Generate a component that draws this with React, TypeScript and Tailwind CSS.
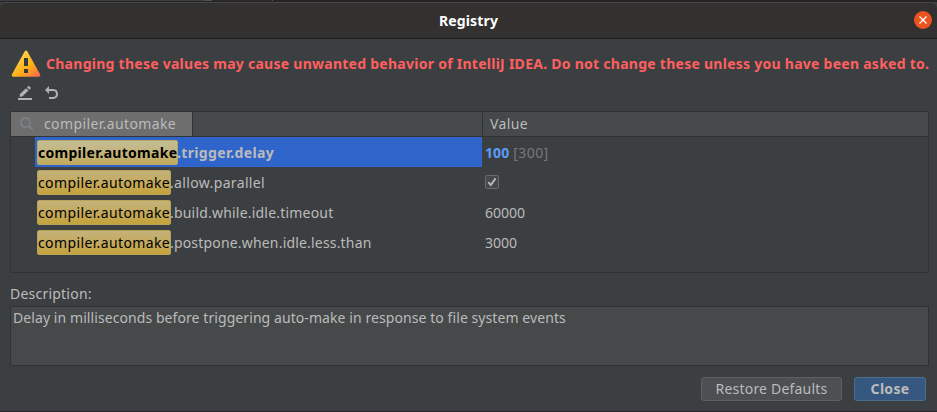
import React from "react";

type Row = {
  rest: string;
  value: React.ReactNode;
  restClass: string;
  selected?: boolean;
};

function WarningIcon() {
  return (
    <svg width="30" height="27" viewBox="0 0 30 27" className="shrink-0">
      <defs>
        <linearGradient id="warn" x1="0.2" y1="0.2" x2="0.9" y2="1">
          <stop offset="0.1" stopColor="#ffce42" />
          <stop offset="0.55" stopColor="#fdae14" />
          <stop offset="1" stopColor="#fb6a52" />
        </linearGradient>
      </defs>
      <path
        d="M13.6 1.4Q15 -0.6 16.4 1.4L29 24.2Q29.8 26.6 27.6 26.8H2.4Q0.2 26.6 1 24.2Z"
        fill="url(#warn)"
      />
      <rect x="13" y="8" width="4" height="8" fill="#373a3c" />
      <rect x="13" y="19" width="4" height="4" fill="#373a3c" />
    </svg>
  );
}

function EditIcon() {
  return (
    <svg width="16" height="16" viewBox="0 0 16 16" fill="#afb1b3">
      <path d="M2.9 9 9.1 3.2 11.5 5.6 5.6 11.3 2.6 12Z" />
      <path d="M10 2.4 11.4 1.1 12.3 1.2 13.7 2.6 13.6 3.5 12.3 4.7Z" />
      <rect x="1" y="13" width="14" height="2" />
    </svg>
  );
}

function RevertIcon() {
  return (
    <svg width="16" height="16" viewBox="0 0 16 16">
      <path
        d="M4.5 5H9Q13 5.2 13 9Q13 12.8 9 13H5"
        fill="none"
        stroke="#afb1b3"
        strokeWidth="2"
      />
      <path d="M1 5 5 1V9Z" fill="#afb1b3" />
    </svg>
  );
}

const rows: Row[] = [
  {
    rest: ".trigger.delay",
    restClass: "-ml-px tracking-[0.34px]",
    selected: true,
    value: (
      <>
        <span className="pt-[2px] font-bold tracking-[0.1px] text-[#589df6]">100</span>
        <span className="ml-1 pt-[2px] tracking-[0.4px] text-[#787878]">[300]</span>
      </>
    ),
  },
  {
    rest: ".allow.parallel",
    restClass: "-ml-px tracking-[0.35px]",
    value: (
      <span className="flex size-[14px] items-center justify-center rounded-[2px] border border-[#6b6b6b] bg-[#43494a]">
        <svg width="10" height="10" viewBox="0 0 10 10">
          <path d="M1.2 5.2 3.8 8 8.6 1.4" fill="none" stroke="#b8babb" strokeWidth="1.9" />
        </svg>
      </span>
    ),
  },
  {
    rest: ".build.while.idle.timeout",
    restClass: "-ml-px tracking-[0.2px]",
    value: <span className="pt-[2px]">60000</span>,
  },
  {
    rest: ".postpone.when.idle.less.than",
    restClass: "-ml-px tracking-[0.18px]",
    value: <span className="pt-[2px]">3000</span>,
  },
];

function RegistryRow({ row }: { row: Row }) {
  return (
    <div className="flex h-[30px]">
      <div
        className={
          row.selected
            ? "ml-6 flex w-[447px] items-center bg-[#2f65ca] pl-[2px] font-bold"
            : "ml-6 flex w-[447px] items-center pl-[2px]"
        }
      >
        <span
          className={
            row.selected
              ? "flex h-[25px] w-[141px] items-center rounded-[2px] border border-[#b9a765] bg-linear-to-b from-[#c4bd95] to-[#c2ab5f] tracking-[0.28px] text-black"
              : "flex h-[25px] w-[134px] items-center rounded-[2px] border border-[#b8a35a] bg-linear-to-b from-[#c4b27a] to-[#c4a23a] tracking-[0.38px] text-black"
          }
        >
          <span className="pt-[2px]">compiler.automake</span>
        </span>
        <span className="pt-[2px]">
          <span className={row.restClass}>{row.rest}</span>
        </span>
      </div>
      <div className="flex items-center pl-[3px]">{row.value}</div>
    </div>
  );
}

export default function App() {
  return (
    <div className="flex h-[412px] w-[937px] flex-col overflow-hidden bg-[#3c3f41] font-['Noto_Sans','Open_Sans',sans-serif] text-[14px] leading-[20px] whitespace-nowrap text-[#bbbbbb]">
      <div className="flex h-[2px] shrink-0 bg-[#242424]">
        <div className="h-px w-[204px] bg-[#3c3f41]" />
        <div className="h-px w-2 bg-[#4e5254]" />
        <div className="h-px w-[60px] bg-[#2b2b2b]" />
        <div className="h-px w-px bg-[#555555]" />
      </div>
      <header className="grid h-[37px] shrink-0 grid-cols-[1fr_auto_1fr] items-center rounded-t-[6px] border-t border-b border-t-[#484646] border-b-[#1d1c1c] bg-[#333030] px-[5px]">
        <span />
        <h1 className="font-bold tracking-[0.15px] text-white">Registry</h1>
        <button className="mb-px flex size-[18px] items-center justify-center justify-self-end rounded-full bg-[#e95420]">
          <svg width="8" height="8" viewBox="0 0 8 8">
            <path d="M0.5 0.5 7.5 7.5M7.5 0.5 0.5 7.5" stroke="#fff" strokeWidth="1.3" />
          </svg>
        </button>
      </header>
      <main className="flex flex-1 flex-col border-b border-[#2b2527] pt-[10px] pr-2 pl-[10px]">
        <div className="flex h-[28px] items-center gap-[5px] pl-px">
          <WarningIcon />
          <p className="pt-[2px] font-bold tracking-[0.264px] text-[#ff5f5f]">
            Changing these values may cause unwanted behavior of IntelliJ IDEA. Do not change these unless you have
            been asked to.
          </p>
        </div>
        <div className="mt-2 flex h-[16px] gap-[11px] pl-[7px]">
          <EditIcon />
          <RevertIcon />
        </div>
        <section className="mt-[10px] h-[162px] border border-[#323232]">
          <div className="flex h-[25px] border-b border-[#323232] bg-[#45494a]">
            <div className="flex w-[182px] items-center border-r border-[#323232] bg-[#6e6e6e]">
              <svg width="14" height="14" viewBox="0 0 14 14" className="ml-[9px]">
                <circle cx="5.5" cy="5.5" r="4.6" fill="none" stroke="#7f8b91" strokeWidth="1.2" />
                <path d="M9 9 12.6 12.6" stroke="#7f8b91" strokeWidth="1.3" />
              </svg>
              <span className="ml-[10px] tracking-[0.38px]">compiler.automake</span>
            </div>
            <div className="my-px ml-[289px] flex items-center border-l border-[#323232] pl-[7px] tracking-[0.4px]">
              <span>Value</span>
            </div>
          </div>
          {rows.map((row) => (
            <RegistryRow key={row.rest} row={row} />
          ))}
        </section>
        <label className="mt-[11px] tracking-[0.22px]">Description:</label>
        <div className="mt-[2px] h-[60px] border border-[#323232] bg-[#45494a] pt-px pl-[2px] tracking-[0.078px]">
          Delay in milliseconds before triggering auto-make in response to file system events
        </div>
        <div className="mt-[11px] flex justify-end gap-3 pr-[3px]">
          <button className="flex h-[24px] w-[141px] items-center justify-center rounded-[3px] border border-[#5e6060] bg-[#4c5052] tracking-[0.2px]">
            Restore Defaults
          </button>
          <button className="flex h-[24px] w-[72px] items-center justify-center rounded-[3px] border border-[#4c708c] bg-[#365880] font-bold tracking-[0.3px]">
            Close
          </button>
        </div>
      </main>
    </div>
  );
}
